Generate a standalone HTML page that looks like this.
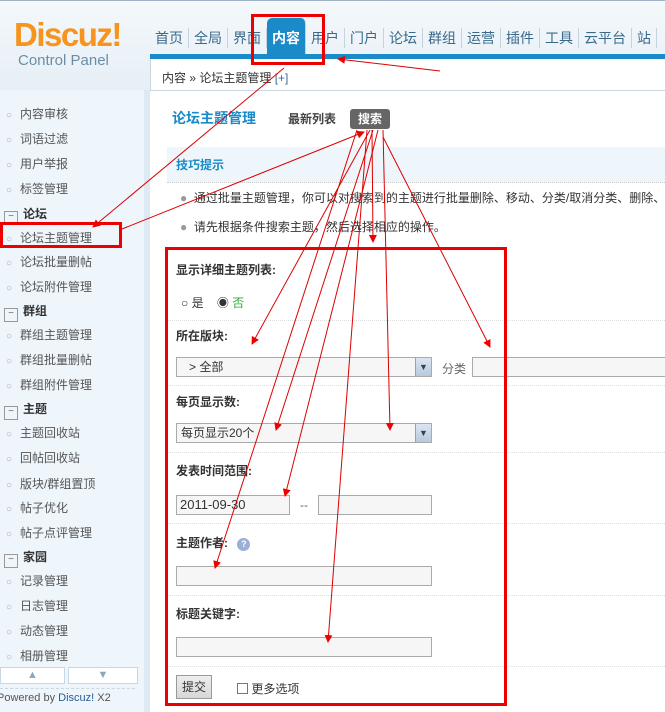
<!DOCTYPE html>
<html><head><meta charset="utf-8"><style>
*{margin:0;padding:0;box-sizing:border-box}
body{width:665px;height:712px;overflow:hidden;position:relative;background:#fff;font-family:"Liberation Sans","Noto Sans CJK SC",sans-serif;font-size:12px;color:#333}
.a{position:absolute;white-space:nowrap}
.hdr{position:absolute;left:0;top:0;width:665px;height:90px;background:linear-gradient(#f4f8fb,#e6eff6);border-top:1px solid #9fb3c4}
.nav{position:absolute;top:28px;left:150px;font-size:14px;color:#3a6a8a;display:flex}
.nav span{padding:0 5px;border-right:1px solid #c4d3de;height:20px;line-height:20px}
.side{position:absolute;left:0;top:90px;width:150px;height:622px;background:#eef5fb;border-right:6px solid #dde9f3}
.si{position:absolute;left:6px;font-size:12px;color:#555;white-space:nowrap}
.si:before{content:"○";color:#aaa;font-size:10px;margin-right:8px}
.sh{position:absolute;left:4px;font-size:12px;font-weight:bold;color:#333;white-space:nowrap}
.sh:before{content:"−";display:inline-block;width:12px;height:12px;border:1px solid #999;font-size:10px;line-height:10px;text-align:center;margin-right:5px;color:#666;font-weight:normal;vertical-align:-1px}
.lbl{position:absolute;left:176px;font-weight:bold;font-size:12px;color:#333}
.sep{position:absolute;left:168px;width:497px;border-top:1px dotted #ddd}
.in{position:absolute;border:1px solid #aaa;background:#f6f6f6;height:20px;line-height:18px}
.dd{position:absolute;right:0;top:0;width:16px;height:18px;background:linear-gradient(#dbe6f2,#b6c9dd);border-left:1px solid #8aa;color:#345;font-size:9px;text-align:center;line-height:18px}
</style></head><body>
<div class="hdr"></div>
<div class="a" style="left:14px;top:16px;font-size:33px;font-weight:bold;color:#f7941d;letter-spacing:-1.5px">Discuz!</div>
<div class="a" style="left:18px;top:52px;font-size:15px;color:#6a8ea8">Control Panel</div>
<div class="nav"><span>首页</span><span>全局</span><span>界面</span><span style="background:#1a8ac8;color:#fff;font-weight:bold;height:38px;margin-top:-10px;line-height:40px;border-radius:5px 5px 0 0">内容</span><span>用户</span><span>门户</span><span>论坛</span><span>群组</span><span>运营</span><span>插件</span><span>工具</span><span>云平台</span><span>站</span></div>
<div class="a" style="left:150px;top:54px;width:515px;height:5px;background:#1a8ac8"></div>
<div class="a" style="left:150px;top:59px;width:515px;height:32px;background:#fff;border-bottom:1px solid #c9d7e2;border-left:1px solid #c9d7e2"></div>
<div class="a" style="left:162px;top:69px;color:#333">内容 » 论坛主题管理 <span style="color:#3a6a9a">[+]</span></div>
<div class="side"></div>
<div class="si" style="top:105px">内容审核</div>
<div class="si" style="top:130px">词语过滤</div>
<div class="si" style="top:155px">用户举报</div>
<div class="si" style="top:180px">标签管理</div>
<div class="sh" style="top:205px">论坛</div>
<div class="si" style="top:229px">论坛主题管理</div>
<div class="si" style="top:253px">论坛批量删帖</div>
<div class="si" style="top:278px">论坛附件管理</div>
<div class="sh" style="top:302px">群组</div>
<div class="si" style="top:326px">群组主题管理</div>
<div class="si" style="top:351px">群组批量删帖</div>
<div class="si" style="top:376px">群组附件管理</div>
<div class="sh" style="top:400px">主题</div>
<div class="si" style="top:424px">主题回收站</div>
<div class="si" style="top:449px">回帖回收站</div>
<div class="si" style="top:475px">版块/群组置顶</div>
<div class="si" style="top:499px">帖子优化</div>
<div class="si" style="top:524px">帖子点评管理</div>
<div class="sh" style="top:548px">家园</div>
<div class="si" style="top:572px">记录管理</div>
<div class="si" style="top:597px">日志管理</div>
<div class="si" style="top:622px">动态管理</div>
<div class="si" style="top:647px">相册管理</div>
<div class="a" style="left:0;top:667px;width:65px;height:17px;border:1px solid #c9d7e2;background:#fff;text-align:center;color:#8ab;font-size:11px;line-height:15px">▲</div>
<div class="a" style="left:68px;top:667px;width:70px;height:17px;border:1px solid #c9d7e2;background:#fff;text-align:center;color:#8ab;font-size:11px;line-height:15px">▼</div>
<div class="a" style="left:0;top:688px;width:135px;border-top:1px dashed #c9d7e2"></div>
<div class="a" style="left:-3px;top:692px;font-size:11px;color:#555">Powered by <span style="color:#2a5a9a">Discuz!</span> X2</div>

<div class="a" style="left:172px;top:108px;font-size:14px;font-weight:bold;color:#1a8ac8">论坛主题管理</div>
<div class="a" style="left:288px;top:110px;font-weight:bold;color:#444">最新列表</div>
<div class="a" style="left:350px;top:109px;width:40px;height:20px;background:#666;border-radius:3px;color:#fff;font-weight:bold;text-align:center;line-height:20px">搜索</div>
<div class="a" style="left:167px;top:147px;width:498px;height:36px;background:#eef5fb;border-bottom:1px dotted #ccc"></div>
<div class="a" style="left:176px;top:156px;font-weight:bold;color:#1a8ac8">技巧提示</div>
<div class="a" style="left:180px;top:189px;color:#333"><span style="color:#999">●</span>&nbsp; 通过批量主题管理，你可以对搜索到的主题进行批量删除、移动、分类/取消分类、删除、</div>
<div class="a" style="left:180px;top:218px;color:#333"><span style="color:#999">●</span>&nbsp; 请先根据条件搜索主题，然后选择相应的操作。</div>

<div class="lbl" style="top:261px">显示详细主题列表:</div>
<div class="a" style="left:181px;top:294px">○ 是 &nbsp;&nbsp; ◉ <span style="color:#3a3">否</span></div>
<div class="sep" style="top:320px"></div>
<div class="lbl" style="top:327px">所在版块:</div>
<div class="in" style="left:176px;top:357px;width:256px"><span style="position:absolute;left:12px;top:0">&gt; 全部</span><div class="dd">▼</div></div>
<div class="a" style="left:442px;top:360px;color:#666">分类</div>
<div class="in" style="left:472px;top:357px;width:200px"></div>
<div class="sep" style="top:385px"></div>
<div class="lbl" style="top:393px">每页显示数:</div>
<div class="in" style="left:176px;top:423px;width:256px"><span style="position:absolute;left:4px;top:0">每页显示20个</span><div class="dd">▼</div></div>
<div class="sep" style="top:452px"></div>
<div class="lbl" style="top:462px">发表时间范围:</div>
<div class="in" style="left:176px;top:495px;width:114px;font-size:13px"><span style="position:absolute;left:3px;top:0">2011-09-30</span></div>
<div class="a" style="left:300px;top:498px;color:#666">--</div>
<div class="in" style="left:318px;top:495px;width:114px"></div>
<div class="sep" style="top:523px"></div>
<div class="lbl" style="top:534px">主题作者: <span style="display:inline-block;width:13px;height:13px;border-radius:50%;background:#9ab0d8;color:#fff;font-size:9px;text-align:center;line-height:13px;margin-left:6px">?</span></div>
<div class="in" style="left:176px;top:566px;width:256px"></div>
<div class="sep" style="top:595px"></div>
<div class="lbl" style="top:605px">标题关键字:</div>
<div class="in" style="left:176px;top:637px;width:256px"></div>
<div class="sep" style="top:666px"></div>
<div class="a" style="left:176px;top:675px;width:36px;height:24px;background:linear-gradient(#eee,#d8d8d8);border:1px solid #999;text-align:center;line-height:22px">提交</div>
<div class="a" style="left:237px;top:680px"><span style="display:inline-block;width:11px;height:11px;border:1px solid #777;vertical-align:-1px"></span> 更多选项</div>

<div class="a" style="left:251px;top:14px;width:74px;height:51px;border:3px solid #e00"></div>
<div class="a" style="left:0;top:222px;width:122px;height:26px;border:3px solid #e00"></div>
<div class="a" style="left:165px;top:247px;width:342px;height:459px;border:3px solid #e00"></div>
<svg class="a" style="left:0;top:0" width="665" height="712">
<defs><marker id="m" markerWidth="8" markerHeight="8" refX="7" refY="4" orient="auto" markerUnits="userSpaceOnUse"><path d="M0,0L8,4L0,8z" fill="#e00"/></marker></defs>
<g stroke="#d00" stroke-width="1" fill="none" marker-end="url(#m)">
<line x1="440" y1="71" x2="338" y2="59"/>
<line x1="284" y1="68" x2="93" y2="227"/>
<line x1="122" y1="229" x2="364" y2="132"/>
<line x1="370" y1="130" x2="252" y2="344"/>
<line x1="383" y1="137" x2="490" y2="347"/>
<line x1="373" y1="130" x2="276" y2="430"/>
<line x1="383" y1="130" x2="390" y2="430"/>
<line x1="378" y1="130" x2="285" y2="496"/>
<line x1="357" y1="130" x2="215" y2="568"/>
<line x1="367" y1="130" x2="328" y2="642"/>
<line x1="372" y1="130" x2="373" y2="242"/>
</g></svg>
</body></html>
